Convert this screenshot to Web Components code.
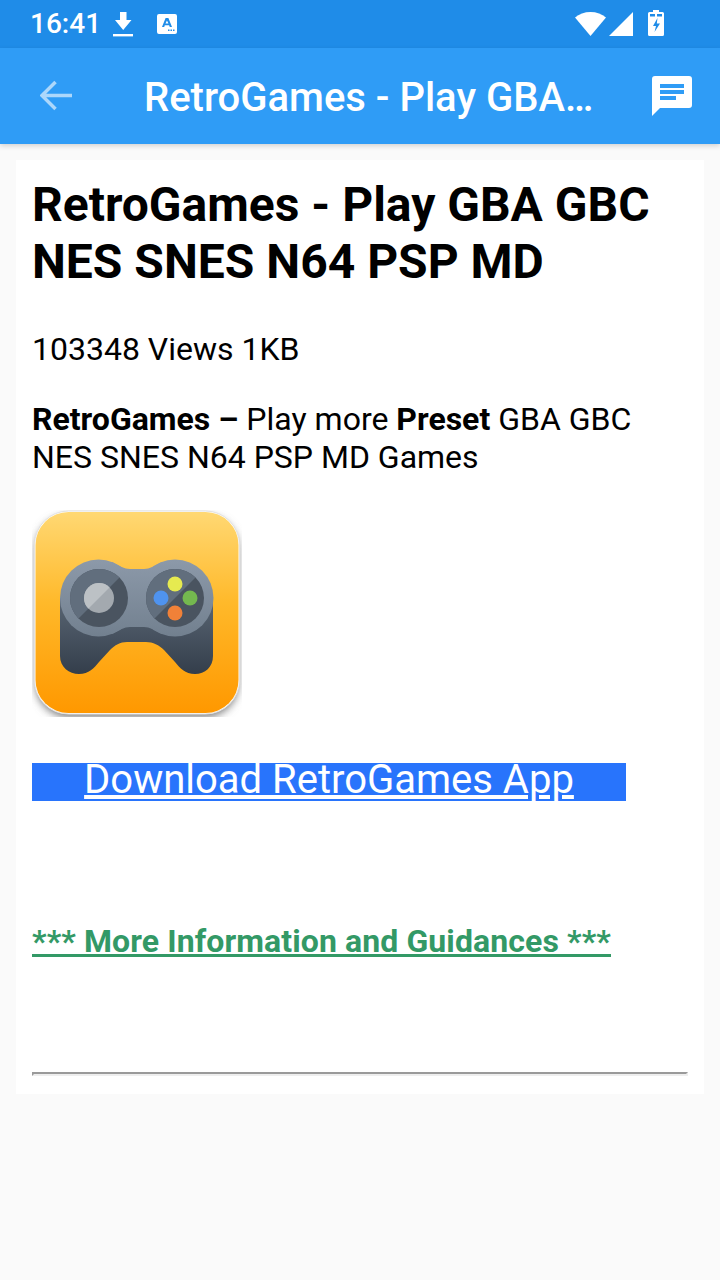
<!DOCTYPE html>
<html>
<head>
<meta charset="utf-8">
<title>RetroGames</title>
<style>
html, body { margin: 0; padding: 0; }
body { background: #fafafa; font-family: Roboto, sans-serif; height: 1280px; overflow: hidden; }
</style>
</head>
<body>
<status-bar></status-bar>
<app-bar title="RetroGames - Play GBA GBC NES SNES N64 PSP MD"></app-bar>
<post-card>
    <h1>RetroGames - Play GBA GBC NES SNES N64 PSP MD</h1>
    <p class="meta">103348 Views 1KB</p>
    <p class="intro"><b>RetroGames –</b> Play more <b>Preset</b> GBA GBC NES SNES N64 PSP MD Games</p>
    <game-icon></game-icon>
    <download-link>Download RetroGames App</download-link>
    <info-link>*** More Information and Guidances ***</info-link>
    <hr-line></hr-line>
</post-card>

<script>
class StatusBar extends HTMLElement {
    constructor() {
        super();
        this.attachShadow({mode: 'open'});
        this.shadowRoot.innerHTML = `
            <style>
                :host {
                    display: flex;
                    align-items: center;
                    height: 48px;
                    background: #1f8ce8;
                    color: #fff;
                    padding: 0 0 0 30px;
                    box-sizing: border-box;
                    font: 500 28px/48px Roboto, sans-serif;
                }
                .time { width: 83px; }
                svg { display: block; fill: #fff; }
                .right { margin-left: auto; display: flex; align-items: center; }
            </style>
            <span class="time">16:41</span>
            <svg width="20" height="26" viewBox="0 0 20 26">
                <path d="M7 1h6.500v8h5L10.200 19 2 9h5z"/>
                <rect x="0" y="23" width="20" height="2.400"/>
            </svg>
            <svg width="20" height="20" viewBox="0 0 20 20" style="margin-left:24px;margin-top:-1px">
                <path fill-rule="evenodd" d="M2 0h16a2 2 0 0 1 2 2v16a2 2 0 0 1-2 2H2a2 2 0 0 1-2-2V2a2 2 0 0 1 2-2zM8.600 4 5 13h2.200l.6-1.800h4.300l.7 1.800H15L11.400 4zM9.950 6.400l1.500 3.100H8.500zM11 15.500v1.500h1.500v-1.500zM13.500 15.500v1.500H15v-1.500zM16 15.500v1.500h1.500v-1.500z"/>
            </svg>
            <div class="right">
                <svg width="31" height="26" viewBox="0 0 31 26" style="margin-right:3px">
                    <path d="M0 6.500C4 3 9.500 1 15.500 1S27 3 31 6.500L15.500 25z"/>
                </svg>
                <svg width="25" height="26" viewBox="1 0 25 26">
                    <path d="M25 1v24H1z"/>
                </svg>
                <svg width="16" height="26" viewBox="0 0 16 26" style="margin-left:14px;margin-right:56px;margin-top:-3px">
                    <path fill-rule="evenodd" d="M5 0h6v2h3.500A1.500 1.500 0 0 1 16 3.500v21a1.500 1.500 0 0 1-1.500 1.500h-13A1.500 1.500 0 0 1 0 24.500v-21A1.500 1.500 0 0 1 1.500 2H5zM2 4v2.500h5V4zM9 4v2.500h5V4zM9.500 8 5 16h3l-1.500 6L12 13.500H8.800z"/>
                </svg>
            </div>
        `;
    }
}

class AppBar extends HTMLElement {
    constructor() {
        super();
        this.attachShadow({mode: 'open'});
        this.shadowRoot.innerHTML = `
            <style>
                :host {
                    display: flex;
                    align-items: center;
                    height: 96px;
                    background: #2f9cf6;
                    color: #fff;
                    box-shadow: 0 2px 5px rgba(0,0,0,0.16);
                    position: relative;
                }
                .back { width: 144px; flex: none; padding-left: 40px; box-sizing: border-box; }
                .title {
                    width: 451px;
                    flex: none;
                    padding-top: 4px;
                    font: 500 40px/48px Roboto, sans-serif;
                    white-space: nowrap;
                    overflow: hidden;
                    text-overflow: ellipsis;
                }
                svg { display: block; }
            </style>
            <div class="back">
                <svg width="32" height="32" viewBox="0 0 32 32">
                    <path d="M16 2 2 16l14 14M2 16h32" transform="scale(.97)" fill="none" stroke="#acd7fb" stroke-width="3.600"/>
                </svg>
            </div>
            <div class="title"></div>
            <svg width="40" height="40" viewBox="0 0 40 40" style="margin-left:57px">
                <path fill="#fff" fill-rule="evenodd" d="M3 0h34a3 3 0 0 1 3 3v26a3 3 0 0 1-3 3H8l-8 8V3a3 3 0 0 1 3-3zM8 8v4h24V8zM8 14v4h24v-4zM8 20v4h16v-4z"/>
            </svg>
        `;
        this.shadowRoot.querySelector('.title').textContent = this.getAttribute('title');
    }
}

class PostCard extends HTMLElement {
    constructor() {
        super();
        this.attachShadow({mode: 'open'});
        this.shadowRoot.innerHTML = `
            <style>
                :host {
                    display: block;
                    margin: 16px 16px 0;
                    height: 934px;
                    box-sizing: border-box;
                    padding: 16px 16px 0;
                    background: #fff;
                    color: #000;
                }
                ::slotted(h1) {
                    margin: 0 0 40px;
                    font: 700 48px/57px Roboto, sans-serif;
                }
                ::slotted(p) {
                    margin: 0;
                    font: 400 32px/38px Roboto, sans-serif;
                }
                ::slotted(.meta) { margin-bottom: 32px; }
                ::slotted(.intro) { margin-bottom: 34px; }
            </style>
            <slot></slot>
        `;
    }
}

class GameIcon extends HTMLElement {
    constructor() {
        super();
        this.attachShadow({mode: 'open'});
        this.shadowRoot.innerHTML = `
            <style>
                :host { display: block; width: 210px; height: 207px; }
                svg { display: block; }
            </style>
            <svg width="210" height="207" viewBox="0 0 210 207">
                <defs>
                    <linearGradient id="bg" x1="0" y1="0" x2="0" y2="1">
                        <stop offset="0" stop-color="#ffd873"/>
                        <stop offset="0.45" stop-color="#ffb92a"/>
                        <stop offset="1" stop-color="#ff9800"/>
                    </linearGradient>
                    <linearGradient id="pad" gradientUnits="userSpaceOnUse" x1="0" y1="88" x2="0" y2="164">
                        <stop offset="0" stop-color="#5a6674"/>
                        <stop offset="1" stop-color="#343e4b"/>
                    </linearGradient>
                    <linearGradient id="ring" gradientUnits="userSpaceOnUse" x1="0" y1="50" x2="0" y2="127">
                        <stop offset="0" stop-color="#8c99a9"/>
                        <stop offset="1" stop-color="#72808f"/>
                    </linearGradient>
                    <clipPath id="halfL"><path d="M27 128 107 48H27z"/></clipPath>
                    <clipPath id="halfR"><path d="M103 128 183 48H103z"/></clipPath>
                    <filter id="blur" x="-10%" y="-10%" width="120%" height="120%">
                        <feGaussianBlur stdDeviation="4"/>
                    </filter>
                </defs>
                <rect x="4" y="6" width="202" height="201" rx="33" fill="#777" filter="url(#blur)"/>
                <rect x="2.500" y="1" width="205" height="203" rx="34" fill="#fff" stroke="#e2e2e2" stroke-width="1"/>
                <rect x="3.500" y="2" width="203" height="201" rx="33" fill="url(#bg)"/>
                <path fill="url(#pad)" d="M28 88V146C28 157 37 164 47 164C57 164 62 158 67 152L78 140C83 135 88 132 95 132H114C121 132 127 135 132 140L143 152C148 158 153 164 163 164C173 164 181 157 181 146V88Z"/>
                <g fill="url(#ring)">
                    <circle cx="66.500" cy="88" r="38.500"/>
                    <circle cx="143" cy="88" r="38.500"/>
                    <path d="M80 52C88 56 92 59 98 59H112C118 59 122 56 130 52V124C122 120 118 117 112 117H98C92 117 88 120 80 124Z"/>
                </g>
                <circle cx="67" cy="88" r="29" fill="#4a5460"/>
                <circle cx="67" cy="88" r="29" fill="#616e7d" clip-path="url(#halfL)"/>
                <circle cx="67" cy="88" r="15" fill="#a3a9af"/>
                <circle cx="67" cy="88" r="15" fill="#bcc1c5" clip-path="url(#halfL)"/>
                <circle cx="143" cy="88" r="29" fill="#4a5460"/>
                <circle cx="143" cy="88" r="29" fill="#616e7d" clip-path="url(#halfR)"/>
                <circle cx="143" cy="74" r="7.500" fill="#e6ea50"/>
                <circle cx="129" cy="88" r="7.500" fill="#4f93ef"/>
                <circle cx="158" cy="88" r="7.500" fill="#74b84f"/>
                <circle cx="143" cy="103" r="7.500" fill="#f08138"/>
            </svg>
        `;
    }
}

class DownloadLink extends HTMLElement {
    constructor() {
        super();
        this.attachShadow({mode: 'open'});
        this.shadowRoot.innerHTML = `
            <style>
                :host {
                    display: block;
                    width: 594px;
                    height: 38px;
                    margin-top: 46px;
                    background: #2874fc;
                    color: #fff;
                    text-align: center;
                    font: 400 40px/34px Roboto, sans-serif;
                    text-decoration: underline;
                }
            </style>
            <slot></slot>
        `;
    }
}

class InfoLink extends HTMLElement {
    constructor() {
        super();
        this.attachShadow({mode: 'open'});
        this.shadowRoot.innerHTML = `
            <style>
                :host {
                    display: block;
                    width: fit-content;
                    margin-top: 127px;
                    color: #339966;
                    font: 700 32px/26px Roboto, sans-serif;
                    letter-spacing: 0.1px;
                    border-bottom: 3px solid #339966;
                }
            </style>
            <slot></slot>
        `;
    }
}

class HrLine extends HTMLElement {
    constructor() {
        super();
        this.attachShadow({mode: 'open'});
        this.shadowRoot.innerHTML = `
            <style>
                :host {
                    display: block;
                    margin-top: 115px;
                    height: 0;
                    border-style: solid;
                    border-width: 2px;
                    border-color: #9a9a9a #eeeeee #eeeeee #9a9a9a;
                }
            </style>
        `;
    }
}

customElements.define('status-bar', StatusBar);
customElements.define('app-bar', AppBar);
customElements.define('post-card', PostCard);
customElements.define('game-icon', GameIcon);
customElements.define('download-link', DownloadLink);
customElements.define('info-link', InfoLink);
customElements.define('hr-line', HrLine);
</script>
</body>
</html>
